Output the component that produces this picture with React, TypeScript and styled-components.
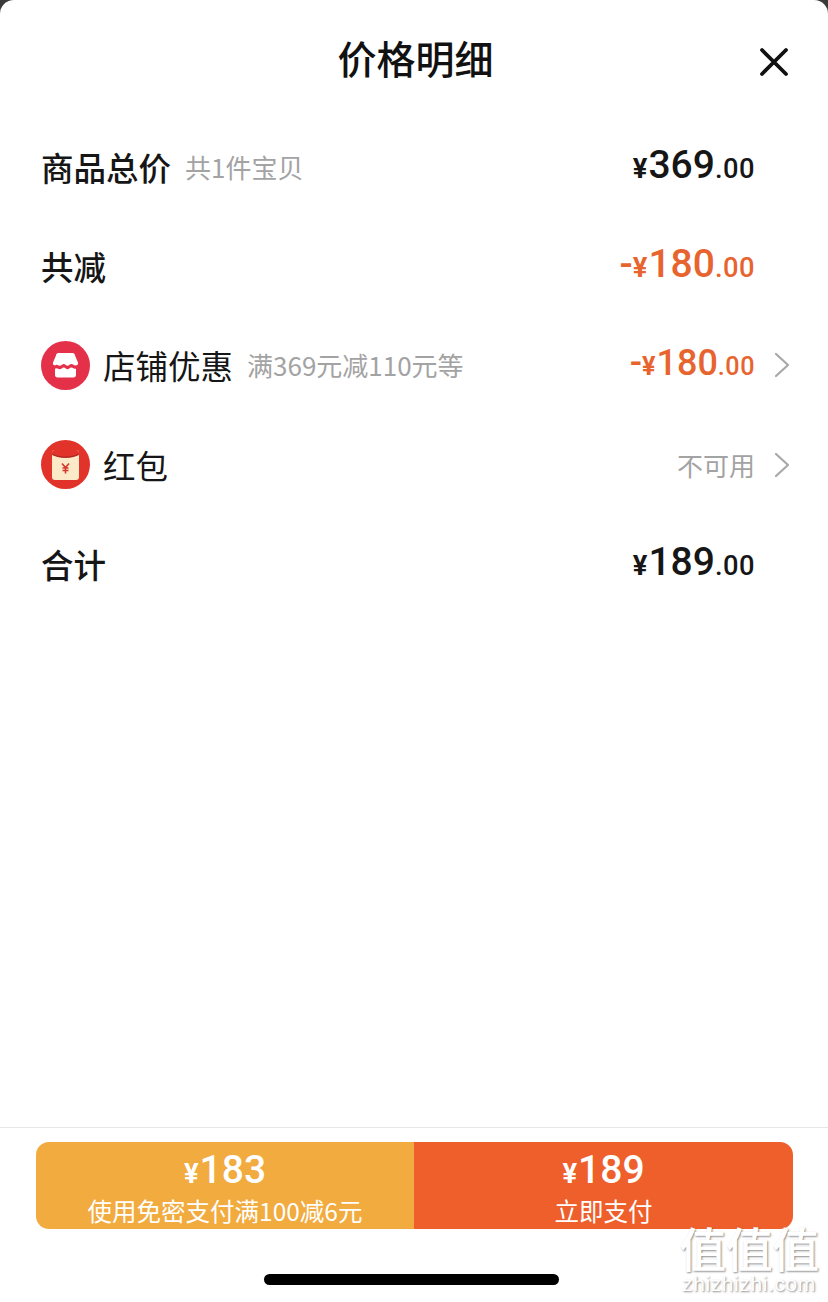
import React from 'react';
import styled, { createGlobalStyle } from 'styled-components';

const GlobalStyle = createGlobalStyle`
  html, body {
    margin: 0;
    padding: 0;
    background: #3a3a3a;
  }
  body {
    font-family: "Noto Sans CJK SC", "Liberation Sans", sans-serif;
  }
`;

const Sheet = styled.div`
  position: relative;
  width: 828px;
  height: 1302px;
  background: #fff;
  border-radius: 14px 14px 0 0;
  overflow: hidden;
  display: flex;
  flex-direction: column;
`;

const Header = styled.header`
  height: 117px;
  padding: 0 38px 0 41px;
  box-sizing: border-box;
  display: grid;
  grid-template-columns: 1fr auto 1fr;
  align-items: start;
`;

const Title = styled.h1`
  grid-column: 2;
  margin: 30px 0 0;
  font-size: 39px;
  line-height: 54px;
  font-weight: 500;
  color: #111;
`;

const CloseButton = styled.button`
  grid-column: 3;
  justify-self: end;
  margin: 46px 0 0;
  padding: 0;
  border: 0;
  background: none;
  width: 32px;
  height: 32px;
  display: block;
`;

const List = styled.div`
  flex: 1;
`;

const Row = styled.div<{ $arrow?: boolean }>`
  height: 99.3px;
  box-sizing: border-box;
  padding: 0 ${p => (p.$arrow ? 38 : 73)}px 0 41px;
  display: flex;
  align-items: center;
`;

const Label = styled.span<{ $strong?: boolean }>`
  font-size: 32.5px;
  line-height: 44px;
  font-weight: ${p => (p.$strong ? 500 : 400)};
  color: #161616;
`;

const Hint = styled.span`
  margin-left: 14px;
  font-size: 26px;
  line-height: 36px;
  color: #a3a3a3;
  font-family: "Noto Sans CJK SC", sans-serif;
`;

const IconBadge = styled.span`
  width: 49px;
  height: 49px;
  margin-right: 13px;
  flex: none;
  display: block;
`;

const Spacer = styled.span`
  flex: 1;
`;

const Amount = styled.span<{ $accent?: boolean; $small?: boolean }>`
  font-family: Roboto, "Liberation Sans", sans-serif;
  color: ${p => (p.$accent ? '#E8642F' : '#161616')};
  display: inline-flex;
  align-items: baseline;
  line-height: 44px;
  font-size: ${p => (p.$small ? 36 : 39)}px;
`;

const Currency = styled.span`
  font-size: 0.7em;
  font-weight: 700;
  margin-right: 1px;
`;

const Whole = styled.span`
  font-weight: 500;
`;

const Cents = styled.span`
  font-size: 0.7em;
  font-weight: 500;
  letter-spacing: 0.5px;
`;

const Muted = styled.span`
  font-size: 26px;
  line-height: 36px;
  color: #a3a3a3;
`;

const Chevron = styled.svg`
  width: 16px;
  height: 26px;
  margin-left: 19px;
  flex: none;
  display: block;
`;

const Footer = styled.footer`
  height: 175px;
  box-sizing: border-box;
  border-top: 1px solid #e6e6e6;
  padding: 14px 35px 0 36px;
  display: flex;
  flex-direction: column;
  align-items: stretch;
`;

const ButtonGroup = styled.div`
  height: 87px;
  display: grid;
  grid-template-columns: 378px 1fr;
  border-radius: 13px;
  overflow: hidden;
`;

const PayButton = styled.button<{ $tone: string }>`
  border: 0;
  padding: 8px 0 0;
  margin: 0;
  color: #fff;
  background: ${p => p.$tone};
  font-family: inherit;
  display: flex;
  flex-direction: column;
  align-items: center;
  justify-content: flex-start;
`;

const PayPrice = styled.span`
  font-family: Roboto, "Liberation Sans", sans-serif;
  font-size: 39px;
  line-height: 40px;
  font-weight: 500;
  display: inline-flex;
  align-items: baseline;
`;

const PayNote = styled.span`
  font-size: 24.5px;
  line-height: 34px;
  margin-top: 0;
`;

const HomeIndicator = styled.div`
  align-self: center;
  width: 295px;
  height: 11px;
  margin-top: 45px;
  margin-left: -6px;
  border-radius: 6px;
  background: #000;
`;

const Watermark = styled.div`
  position: absolute;
  right: 8px;
  bottom: 6px;
  width: 142px;
  text-align: center;
  color: #fff;
  text-shadow: 1px 1px 2px rgba(0, 0, 0, 0.45);
`;

const WatermarkMark = styled.div`
  font-size: 47px;
  line-height: 50px;
  letter-spacing: -0.5px;
  font-weight: 500;
`;

const WatermarkUrl = styled.div`
  font-family: "Liberation Sans", sans-serif;
  font-size: 21px;
  line-height: 24px;
  letter-spacing: 0.6px;
`;

const StoreIcon = () => (
  <svg viewBox="0 0 49 49" width="49" height="49">
    <circle cx="24.5" cy="24.5" r="24.5" fill="#E5304A" />
    <path
      d="M15 14.5 C15 13 16 12 17.5 12 H31.5 C33 12 34 13 34 14.5 L37 21.5 C37.5 23.5 36 24.5 34.5 24.5 C32.8 24.5 32 23 30.5 23 C28.5 23 28 24.8 26.5 24.8 C25 24.8 24.5 23 22.7 23 C21 23 20.5 24.8 18.7 24.8 C17 24.8 16.5 23 14.5 24.2 C13 24.8 11.5 23.5 12 21.5 Z"
      fill="#fff"
    />
    <path
      d="M14 27.8 C16 26.3 17 28.2 18.7 28.2 C20.5 28.2 21 26.4 22.7 26.4 C24.5 26.4 25 28.2 26.5 28.2 C28 28.2 28.5 26.4 30.5 26.4 C32 26.4 33 28 35 27.8 V34 C35 35.5 34 36.5 32.5 36.5 H16.5 C15 36.5 14 35.5 14 34 Z"
      fill="#fff"
    />
  </svg>
);

const PacketIcon = () => (
  <svg viewBox="0 0 49 49" width="49" height="49">
    <circle cx="24.5" cy="24.5" r="24.5" fill="#E2332B" />
    <rect x="11" y="10" width="27" height="30" rx="3" fill="#FBE9C8" />
    <path d="M11 13 C11 11 12 10 14 10 H35 C37 10 38 11 38 13 V15 C30 19 19 19 11 15 Z" fill="#E2332B" />
    <path d="M12 14.5 C19 18 30 18 37 14.5" fill="none" stroke="#9c2a22" strokeWidth="1" />
    <path
      d="M21 23.5 L24.5 27.5 L28 23.5 M24.5 27.5 V33.5 M21.5 28 H27.5 M21.5 30.5 H27.5"
      fill="none"
      stroke="#D4382C"
      strokeWidth="1.6"
    />
  </svg>
);

const Arrow = () => (
  <Chevron viewBox="0 0 16 26">
    <path d="M2 2 L14 13 L2 24" fill="none" stroke="#a8a8a8" strokeWidth="2.2" strokeLinecap="round" strokeLinejoin="round" />
  </Chevron>
);

const Price: React.FC<{ whole: string; accent?: boolean; small?: boolean; minus?: boolean }> = ({ whole, accent, small, minus }) => (
  <Amount $accent={accent} $small={small}>
    {minus && <Whole>-</Whole>}
    <Currency>¥</Currency>
    <Whole>{whole}</Whole>
    <Cents>.00</Cents>
  </Amount>
);

export default function App() {
  return (
    <>
      <GlobalStyle />
      <Sheet>
        <Header>
          <Title>价格明细</Title>
          <CloseButton aria-label="关闭">
            <svg viewBox="0 0 32 32" width="32" height="32">
              <path d="M4 4 L28 28 M28 4 L4 28" stroke="#111" strokeWidth="3.8" strokeLinecap="round" />
            </svg>
          </CloseButton>
        </Header>
        <List>
          <Row>
            <Label $strong>商品总价</Label>
            <Hint>共1件宝贝</Hint>
            <Spacer />
            <Price whole="369" />
          </Row>
          <Row>
            <Label $strong>共减</Label>
            <Spacer />
            <Price whole="180" accent minus />
          </Row>
          <Row $arrow>
            <IconBadge><StoreIcon /></IconBadge>
            <Label>店铺优惠</Label>
            <Hint>满369元减110元等</Hint>
            <Spacer />
            <Price whole="180" accent small minus />
            <Arrow />
          </Row>
          <Row $arrow>
            <IconBadge><PacketIcon /></IconBadge>
            <Label>红包</Label>
            <Spacer />
            <Muted>不可用</Muted>
            <Arrow />
          </Row>
          <Row>
            <Label $strong>合计</Label>
            <Spacer />
            <Price whole="189" />
          </Row>
        </List>
        <Footer>
          <ButtonGroup>
            <PayButton $tone="#F1AB3E">
              <PayPrice><Currency>¥</Currency>183</PayPrice>
              <PayNote>使用免密支付满100减6元</PayNote>
            </PayButton>
            <PayButton $tone="#EE5F2C">
              <PayPrice><Currency>¥</Currency>189</PayPrice>
              <PayNote>立即支付</PayNote>
            </PayButton>
          </ButtonGroup>
          <HomeIndicator />
        </Footer>
        <Watermark>
          <WatermarkMark>值值值</WatermarkMark>
          <WatermarkUrl>zhizhizhi.com</WatermarkUrl>
        </Watermark>
      </Sheet>
    </>
  );
}
